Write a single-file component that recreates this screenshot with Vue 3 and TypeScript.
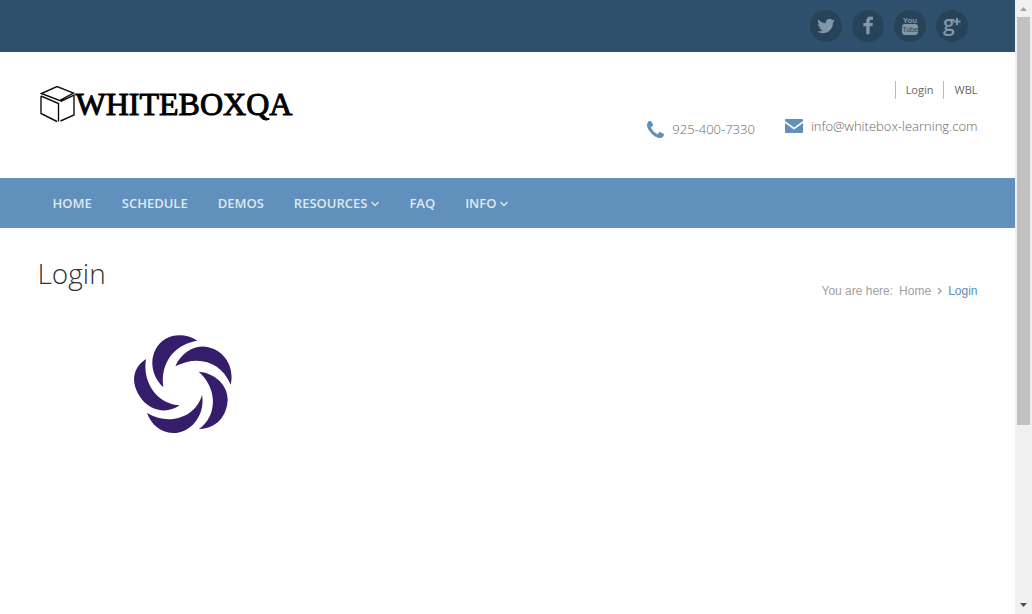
<script setup lang="ts">
interface NavItem {
  label: string
  menu: boolean
}

const navItems: NavItem[] = [
  { label: 'HOME', menu: false },
  { label: 'SCHEDULE', menu: false },
  { label: 'DEMOS', menu: false },
  { label: 'RESOURCES', menu: true },
  { label: 'FAQ', menu: false },
  { label: 'INFO', menu: true },
]
</script>

<template>
  <div class="window">
    <div class="page">
      <div class="topbar">
        <div class="container social">
          <a href="#" aria-label="Twitter">
            <svg viewBox="0 0 1792 1792" width="20" height="20"><path d="M1684 408q-67 98-162 167 1 14 1 42 0 130-38 259.5t-115.5 248.5-184.5 210.5-258 146-323 54.5q-271 0-496-145 35 4 78 4 225 0 401-138-105-2-188-64.5t-114-159.5q33 5 61 5 43 0 85-11-112-23-185.500-111.500t-73.500-205.500v-4q68 38 146 41-66-44-105-115t-39-154q0-88 44-163 121 149 294.500 238.500t371.500 99.500q-8-38-8-74 0-134 94.500-228.500t228.500-94.500q140 0 236 102 109-21 205-78-37 115-142 178 93-10 186-50z" /></svg>
          </a>
          <a href="#" aria-label="Facebook">
            <svg viewBox="0 0 1792 1792" width="20" height="20"><path d="M1343 62v274h-157q-86 0-116 36t-30 108v149h293l-39 286h-254v729h-306v-729h-255v-286h255v-178q0-196 104-298.500t277-102.500q147 0 228 12z" /></svg>
          </a>
          <a href="#" aria-label="YouTube">
            <svg viewBox="0 0 32 32" width="32" height="32">
              <text class="you" x="16" y="13" text-anchor="middle">You</text>
              <rect x="8" y="14" width="16" height="11" rx="3" />
              <text class="tube" x="16" y="22" text-anchor="middle">Tube</text>
            </svg>
          </a>
          <a href="#" aria-label="Google Plus">
            <svg viewBox="0 0 32 32" width="32" height="32">
              <text class="gee" x="7" y="21">g</text>
              <path d="M20 8h2v2.500h2.500v2H22V15h-2v-2.500h-2.500v-2H20z" />
            </svg>
          </a>
        </div>
      </div>

      <header class="container header">
        <a class="logo" href="#">
          <svg viewBox="0 0 36 38" width="36" height="38">
            <path d="M1.500 8.500 17 1.500 33.500 8 19.500 15.500zM1 11v17.500l16 8M1 11l17.500 7.500v18M20.500 36 34 30V10L20.500 16.500" />
          </svg>
          <span>WHITEBOXQA</span>
        </a>
        <div class="info">
          <div class="account">
            <a href="#">Login</a>
            <a href="#">WBL</a>
          </div>
          <div class="contact">
            <span class="phone">
              <svg viewBox="192 256 1408 1408" width="17" height="17"><path d="M1600 1368q0 27-10 70.500t-21 68.500q-21 50-122 106-94 51-186 51-27 0-53-3.500t-57-12.500-47-14.500-55.500-20.500-49.500-18q-98-35-175-83-127-79-264-216t-216-264q-48-77-83-175-3-9-18-49.500t-20.500-55.500-14.500-47-12.500-57-3.500-53q0-92 51-186 56-101 106-122 25-11 68.500-21t70.500-10q14 0 21 3 18 6 53 76 11 19 30 54t35 63.500 31 53.500q3 4 17.500 25t21.500 35.500 7 28.500q0 20-28.500 50t-62 55-62 53-28.500 46q0 9 5 22.500t8.500 20.500 14 24 11.500 19q76 137 174 235t235 174q2 1 19 11.500t24 14 20.500 8.500 22.500 5q18 0 46-28.500t53-62 55-62 50-28.500q14 0 28.500 7t35.500 21.500 25 17.500q25 15 53.500 31t63.500 35 54 30q70 35 76 53 3 7 3 21z" /></svg>
              925-400-7330
            </span>
            <a class="mail" href="mailto:info@whitebox-learning.com">
              <svg viewBox="0 0 18 14" width="18" height="14"><path d="M0 1Q0 0 1 0h16q1 0 1 1v1L9 8.500 0 2zM0 4l9 6.500L18 4v9q0 1-1 1H1q-1 0-1-1z" /></svg>
              info@whitebox-learning.com
            </a>
          </div>
        </div>
      </header>

      <nav class="nav">
        <div class="container menu">
          <a v-for="item in navItems" :key="item.label" href="#">
            {{ item.label }}
            <svg v-if="item.menu" viewBox="0 0 8 8" width="8" height="8"><path d="M.5 3 4 6.500 7.500 3" /></svg>
          </a>
        </div>
      </nav>

      <main class="container">
        <div class="heading">
          <h1>Login</h1>
          <div class="crumbs">
            <span class="lead">You are here:</span>
            <a href="#">Home</a>
            <svg viewBox="0 0 5 8" width="5" height="8"><path d="M1 1l3 3-3 3" /></svg>
            <a class="current" href="#">Login</a>
          </div>
        </div>
        <svg class="swirl" viewBox="42 29 294 294" width="98" height="98">
          <path d="M232 46C190 18 130 26 107 72C88 108 96 154 130 186C120 118 158 58 232 46z" />
          <path d="M166 123C184 82 220 62 254 64C304 68 346 116 332 178C304 108 232 88 166 123z" />
          <path d="M236 139C290 144 323 182 323 222C322 272 288 312 237 311C292 272 294 190 236 139z" />
          <path d="M246 209C256 262 220 318 168 323C126 325 94 300 81 263C150 304 228 274 246 209z" />
          <path d="M179 240C140 268 88 256 60 214C28 168 42 124 78 101C66 172 112 236 179 240z" />
        </svg>
      </main>
    </div>

    <div class="scrollbar" aria-hidden="true">
      <svg viewBox="0 0 17 17" width="17" height="17"><path class="up" d="M5 11h7L8.500 7z" /></svg>
      <div class="track"><div class="thumb"></div></div>
      <svg viewBox="0 0 17 17" width="17" height="17"><path class="down" d="M5 6h7L8.500 10z" /></svg>
    </div>
  </div>
</template>

<style>
body {
  margin: 0;
}
</style>

<style scoped>
.window {
  display: flex;
  min-height: 100vh;
  background: #fff;
  font-family: "Open Sans", "Liberation Sans", sans-serif;
  color: #666;
}

.page {
  flex: 1;
  min-width: 0;
}

a {
  color: inherit;
  text-decoration: none;
}

svg {
  display: block;
  flex: none;
}

.container {
  box-sizing: border-box;
  width: 100%;
  max-width: 940px;
  margin: 0 auto;
}

.topbar {
  background: #2e506c;
}

.social {
  display: flex;
  justify-content: flex-end;
  gap: 10px;
  padding: 10px;
}

.social a {
  display: flex;
  align-items: center;
  justify-content: center;
  width: 32px;
  height: 32px;
  border-radius: 50%;
  background: #274359;
}

.social svg {
  overflow: visible;
  fill: #8196a6;
}

.you {
  font: 700 8px "Liberation Sans Narrow", "Liberation Sans", sans-serif;
}

.social .tube {
  fill: #274359;
  font: 7px "Liberation Sans Narrow", "Liberation Sans", sans-serif;
}

.gee {
  font: 600 21px "Open Sans", sans-serif;
}

.header {
  display: flex;
  justify-content: space-between;
  min-height: 126px;
}

.logo {
  display: flex;
  align-items: center;
  align-self: flex-start;
  padding: 33px 0 0 2px;
  color: #000;
  font: 32px/38px "Liberation Serif", serif;
  -webkit-text-stroke: 1px #000;
}

.logo svg {
  fill: none;
  stroke: #111;
  stroke-width: 1.4;
}

.info {
  padding-top: 29px;
}

.account {
  display: flex;
  justify-content: flex-end;
  font-size: 11px;
  line-height: 18px;
}

.account a {
  padding-left: 10px;
  margin-left: 10px;
  border-left: 1px solid #bbb;
}

.contact {
  display: flex;
  gap: 30px;
  margin-top: 17px;
  font-size: 13px;
  font-weight: 300;
  line-height: 20px;
}

.contact svg {
  fill: #6090bb;
}

.phone,
.mail {
  display: flex;
  align-items: center;
  align-self: flex-start;
  gap: 8px;
}

.phone {
  padding-top: 3px;
}

.nav {
  background: #6090bb;
}

.menu {
  display: flex;
  gap: 30px;
  padding: 0 15px;
  color: #dfe9f1;
  font-size: 13px;
  font-weight: 600;
  line-height: 50px;
}

.menu a {
  display: flex;
  align-items: center;
  gap: 4px;
}

.menu svg,
.crumbs svg {
  fill: none;
  stroke: currentColor;
  stroke-width: 1.3;
}

.heading {
  display: flex;
  justify-content: space-between;
  padding-top: 25px;
}

h1 {
  margin: 0;
  color: #333;
  font-size: 28px;
  font-weight: 300;
  line-height: 40px;
}

.crumbs {
  display: flex;
  align-items: center;
  gap: 6px;
  margin-top: 29px;
  color: #a0a0a0;
  font: 12px/18px "Liberation Sans", Arial, sans-serif;
}

.current {
  color: #5a8fc0;
}

.swirl {
  margin: 35px 0 0 96px;
  fill: #351d6b;
}

.scrollbar {
  display: flex;
  flex-direction: column;
  width: 17px;
  background: #f0f0f0;
}

.track {
  flex: 1;
  padding: 0 2px;
}

.thumb {
  height: 70.4%;
  background: #c1c1c1;
}

.up {
  fill: #a3a3a3;
}

.down {
  fill: #505050;
}
</style>
